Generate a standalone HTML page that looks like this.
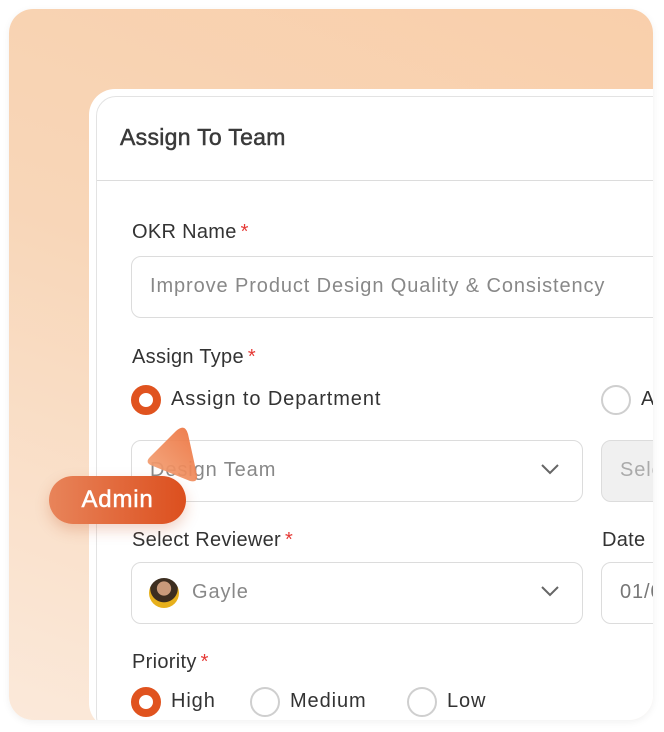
<!DOCTYPE html>
<html><head><style>
*{margin:0;padding:0;box-sizing:border-box}
body{width:664px;height:732px;background:#fff;position:relative;overflow:hidden;font-family:"Liberation Sans",sans-serif;color:#333}
.bg{position:absolute;left:9px;top:9px;width:644px;height:711px;border-radius:24px;overflow:hidden;background:linear-gradient(200deg,#f9cfab 0%,#f8d6b8 45%,#fbe9da 100%);box-shadow:0 2px 8px rgba(0,0,0,.06)}
.card{position:absolute;left:80px;top:80px;width:600px;height:640px;background:#fff;border-radius:26px;}
.inner{position:absolute;left:7px;top:7px;width:600px;height:640px;border:1.5px solid #e3e3e3;border-radius:20px;background:#fff}
.hdr{height:84px;border-bottom:1.5px solid #dcdcdc;padding:27px 0 0 23px;font-size:23px;letter-spacing:0.3px;-webkit-text-stroke:0.5px #3a3a3a;color:#3a3a3a}
.lbl{position:absolute;font-size:20px;letter-spacing:0.3px;color:#333}
.lbl b{color:#e53935;font-weight:normal;margin-left:4px}
.inp{position:absolute;border:1.5px solid #dcdcdc;border-radius:10px;height:62px;font-size:20px;letter-spacing:0.9px;color:#888;padding-left:18px;line-height:59px;background:#fff}
.r{position:absolute;width:30px;height:30px;border-radius:50%}
.on{border:8px solid #e0531f;background:#fff}
.off{border:2px solid #cfcfcf}
.rt{position:absolute;font-size:20px;letter-spacing:0.9px;color:#333}
.chev{position:absolute;right:22px;top:22px}
</style></head><body>
<div class="bg">
 <div class="card">
  <div class="inner">
   <div class="hdr">Assign To Team</div>
   <div class="lbl" style="left:35px;top:124px">OKR Name<b>*</b></div>
   <div class="inp" style="left:34px;top:159px;width:600px">Improve Product Design Quality &amp; Consistency</div>
   <div class="lbl" style="left:35px;top:249px">Assign Type<b>*</b></div>
   <div class="r on" style="left:34px;top:288px"></div>
   <div class="rt" style="left:74px;top:291px">Assign to Department</div>
   <div class="r off" style="left:504px;top:288px"></div>
   <div class="rt" style="left:544px;top:291px">A</div>
   <div class="inp" style="left:34px;top:343px;width:452px">Design Team<svg class="chev" width="20" height="12" viewBox="0 0 20 12"><path d="M2 2l8 8 8-8" fill="none" stroke="#666" stroke-width="2"/></svg></div>
   <div class="inp" style="left:504px;top:343px;width:120px;background:#f0f0f0;color:#aaa">Sele</div>
   <div class="lbl" style="left:35px;top:432px">Select Reviewer<b>*</b></div>
   <div class="lbl" style="left:505px;top:432px">Date</div>
   <div class="inp" style="left:34px;top:465px;width:452px;padding-left:60px">Gayle<svg class="chev" width="20" height="12" viewBox="0 0 20 12"><path d="M2 2l8 8 8-8" fill="none" stroke="#666" stroke-width="2"/></svg>
    <div style="position:absolute;left:17px;top:15px;width:30px;height:30px;border-radius:50%;background:radial-gradient(circle at 50% 35%,#c99a7a 0 28%,#3d2e20 30% 55%,#e7b01c 57%)"></div></div>
   <div class="inp" style="left:504px;top:465px;width:120px;color:#777">01/0</div>
   <div class="lbl" style="left:35px;top:554px">Priority<b>*</b></div>
   <div class="r on" style="left:34px;top:590px"></div><div class="rt" style="left:74px;top:593px">High</div>
   <div class="r off" style="left:153px;top:590px"></div><div class="rt" style="left:193px;top:593px">Medium</div>
   <div class="r off" style="left:310px;top:590px"></div><div class="rt" style="left:350px;top:593px">Low</div>
  </div>
 </div>
</div>
<svg style="position:absolute;left:140px;top:420px" width="70" height="75" viewBox="0 0 70 75"><defs><linearGradient id="g" x1="0" y1="1" x2="1" y2="0"><stop offset="0" stop-color="#f3a57a"/><stop offset="1" stop-color="#ec6f3a"/></linearGradient></defs><path d="M10 37 L36 11 Q45 3 48 14 L57 55 Q58 63 50 61 L13 46 Q4 43 10 37 Z" fill="url(#g)" opacity="0.92"/></svg>
<div style="position:absolute;left:49px;top:476px;width:137px;height:48px;border-radius:24px;background:linear-gradient(90deg,#e8845a,#dc4f1e);color:#fff;font-size:24px;letter-spacing:0.8px;-webkit-text-stroke:0.5px #fff;line-height:48px;text-align:center;box-shadow:0 6px 14px rgba(200,80,30,.25)">Admin</div>
</body></html>
